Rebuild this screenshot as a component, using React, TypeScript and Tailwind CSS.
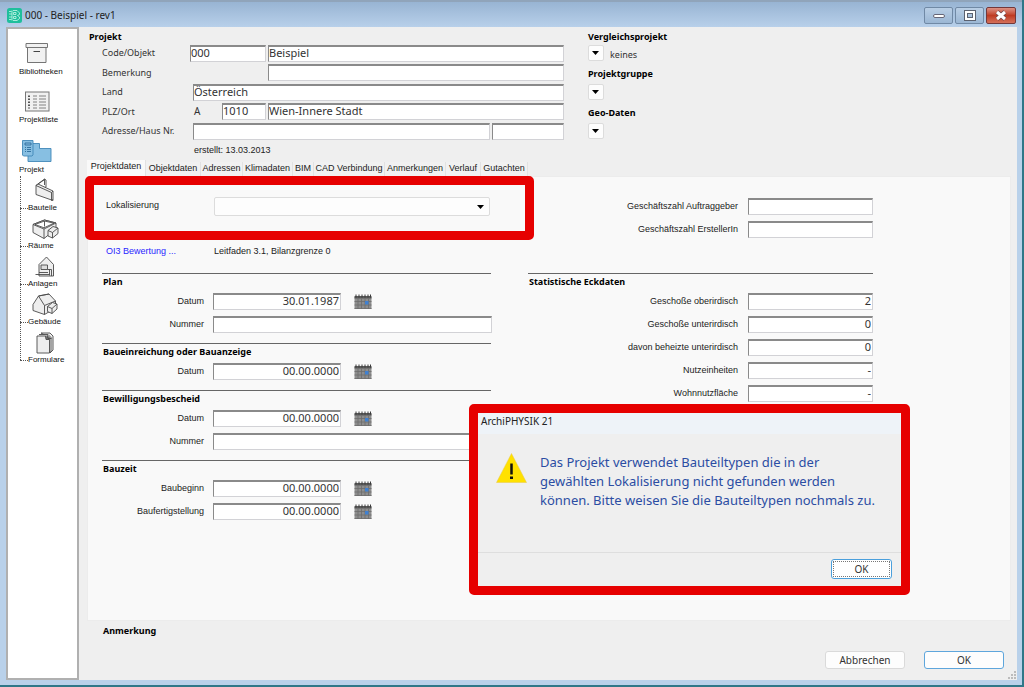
import { useState, type ReactNode } from "react";
import clsx from "clsx";

const TABS = [
    { name: "Projektdaten", width: "w-[59px]" },
    { name: "Objektdaten", width: "w-[55px]" },
    { name: "Adressen", width: "w-[42px]" },
    { name: "Klimadaten", width: "w-[50px]" },
    { name: "BIM", width: "w-[21px]" },
    { name: "CAD Verbindung", width: "w-[71px]" },
    { name: "Anmerkungen", width: "w-[61px]" },
    { name: "Verlauf", width: "w-[35px]" },
    { name: "Gutachten", width: "w-[47px]" },
];

const LINE = { fill: "#eeeeee", stroke: "#4a4a4a", strokeWidth: 0.9, strokeLinejoin: "round" as const };

/* ---------- icons ---------- */

function AppIcon() {
    return (
        <svg className="h-[15px] w-[15px]" viewBox="0 0 15 15" fill="none" stroke="#c9f7ea" strokeWidth="0.8">
            <rect width="15" height="15" rx="2.5" fill="#1fbf9c" stroke="none" />
            <path d="M2 3.500h2.500M2 6h3M2 9h3M2 11.500h2.500M6 2.500h4l2.500 2.500v1.500L10.500 7.500l2 1.500v1.500L10 12.500H6M6.500 4.500h2.500v2H6.500zM6.500 8.500h2.500v2H6.500zM5 2.500v10" />
        </svg>
    );
}

function BoxIcon() {
    return (
        <svg className="h-[22px] w-[24px]" viewBox="0 0 24 22" fill="#f1f1f1" stroke="#757575" strokeWidth="1">
            <path d="M2.500 5.500h18.500v15H2.500z" />
            <path d="M1 1.500h21.500v4H1z" />
            <path d="M8.500 9.500h6.500" stroke="#444" />
        </svg>
    );
}

function ListIcon() {
    return (
        <svg className="h-[21px] w-[25px]" viewBox="0 0 25 21" fill="none" stroke="#777">
            <rect x="0.500" y="1" width="23.500" height="19" fill="#f1f1f1" />
            <path d="M4 4.500v13" stroke="#555" strokeWidth="2" strokeDasharray="1.500 1.500" />
            <path d="M8 5h4M8 8h4M8 11h4M8 14h4M8 17h4M14 5h7M14 8h7M14 11h7M14 14h7M14 17h7" strokeWidth="0.900" />
        </svg>
    );
}

function ProjectIcon() {
    return (
        <svg className="h-[23px] w-[30px]" viewBox="0 0 30 23" fill="#87bfe2" stroke="#4288b8" strokeWidth="0.9">
            <path d="M6 21.500V3.500h11.500v5h11.500v13z" />
            <path d="M0.500 0.500h10.500v14.500l-1 1H1.500l-1-1z" />
            <path d="M3 3h6v2H3zM3 7.500h1M5 7.500h4M3 9.500h1M5 9.500h4M3 11.500h1M5 11.500h4" stroke="#2d6c9c" />
        </svg>
    );
}

function WallIcon() {
    return (
        <svg className="h-[24px] w-[20px]" viewBox="0 0 20 24" {...LINE}>
            <path d="M1 7.500l8.500-6.500 1.500 1v7l-7 3.500z" fill="#fff" />
            <path d="M1 7.500l2-1.500 15 7v9.500L1 16.500z" />
            <path d="M9.500 1v6M1 7.500L16.500 14.500v8l1.500-1M16.500 14.500l1.500-1.500M3 6l6-4" fill="none" />
        </svg>
    );
}

function RoomIcon() {
    return (
        <svg className="h-[21px] w-[27px]" viewBox="0 0 27 21" {...LINE}>
            <path d="M1 5.500L12.500 1 24 4v6l-12 9.500L1 13.500z" />
            <path d="M1 5.500L12.500 1 24 4 12 10z" fill="#fff" />
            <path d="M3 5.500L12.500 2 22 4.200l-10 4.600zM12.500 2v5.500M12 10v9.500" fill="none" />
            <path d="M16 11.500l5-4 5 1.500v5.500l-5.500 4.500-4.500-2z" />
            <path d="M16 11.500l4.500 2L26 9M20.500 13.500v5.500" fill="none" />
        </svg>
    );
}

function PlantIcon() {
    return (
        <svg className="h-[22px] w-[20px]" viewBox="0 0 20 22" {...LINE}>
            <path d="M4 19V8.500L11.500 1l7 7.500v11.500H4z" />
            <rect x="6" y="9" width="6.500" height="4.500" fill="#ddd" />
            <path d="M0.500 18.500h14M12.500 13.500h4v6.500M14.500 13.500v6M4 16.500h9" fill="none" />
        </svg>
    );
}

function HouseIcon() {
    return (
        <svg className="h-[23px] w-[26px]" viewBox="0 0 26 23" {...LINE}>
            <path d="M1 11.500L6.500 3l10.500-2 6.500 7v7L12.500 21.500 1 17.500z" />
            <path d="M6.500 3l6 9.500L23.500 8M12.500 12.500v9M17 1L6.500 3" fill="none" />
            <path d="M15.500 13.500l5-4 4.500 1.500v5l-5 4.500-4.500-2z" />
            <path d="M15.500 13.500l4.500 2 5-4.500M20 15.500v5" fill="none" />
        </svg>
    );
}

function FormsIcon() {
    return (
        <svg className="h-[22px] w-[18px]" viewBox="0 0 18 22" {...LINE}>
            <path d="M5 1h9l3 3v14l-3 3V6z" />
            <path d="M3 2.500h9l3 3V20" />
            <path d="M1 4h8.500l4 3.500V21H1z" />
            <path d="M9.500 4l0.500 3.500h3.500M11 3l1 3.500h3.500" fill="#777" />
        </svg>
    );
}

function CalendarIcon() {
    return (
        <svg className="h-[16px] w-[18px]" viewBox="0 0 18 16">
            <path d="M0.500 3h17v12H0.500z" fill="#8e8e8e" />
            <path d="M0.500 2h17v2.500H0.500z" fill="#5a5a5a" />
            <path d="M2 0.500v3M5 0.500v3M8 0.500v3M11 0.500v3M14 0.500v3M16.500 0.500v3" stroke="#3a3a3a" />
            <path d="M0.500 7.500h17M0.500 11h17M0.500 14.500h17M4 4.500v10.500M7.500 4.500v10.500M11 4.500v10.500M14.500 4.500v10.500" stroke="#6c6c6c" strokeWidth="0.800" />
            <rect x="11" y="7" width="3.500" height="3.500" fill="#3f80d0" />
        </svg>
    );
}

function Arrow() {
    return (
        <svg className="h-1 w-[7px]" viewBox="0 0 7 4">
            <path d="M0 0h7L3.500 4z" fill="#000" />
        </svg>
    );
}

/* ---------- controls ---------- */

function TextField({ id, label, value = "", className }: { id?: string; label?: string; value?: string; className?: string }) {
    return (
        <input
            id={id}
            aria-label={label}
            type="text"
            defaultValue={value}
            className={clsx(
                "h-[17px] min-w-0 border border-t-2 border-t-[#8a8a8a] border-r-[#d2d2d6] border-b-[#d2d2d6] border-l-[#8a8a8a] bg-white pb-[3px] font-['Noto_Sans',sans-serif] text-[11px] leading-[11px] text-[#333] outline-none",
                className,
            )}
        />
    );
}

function MiniSelect({ label, option = "" }: { label: string; option?: string }) {
    return (
        <div className="relative h-4 w-4">
            <select aria-label={label} className="h-4 w-4 appearance-none rounded-xs border border-[#dcdcdc] bg-[#fdfdfd] text-transparent">
                <option>{option}</option>
            </select>
            <span className="pointer-events-none absolute top-[6px] left-1 flex">
                <Arrow />
            </span>
        </div>
    );
}

function HeaderRow({ id, label, children }: { id: string; label: string; children: ReactNode }) {
    return (
        <div className="flex items-center">
            <label htmlFor={id} className="w-[88px] shrink-0">
                {label}
            </label>
            <div className="flex flex-1 items-center justify-end gap-[2px]">{children}</div>
        </div>
    );
}

function Section({ title, children }: { title: string; children: ReactNode }) {
    return (
        <section className="border-t border-[#666] pb-[7px]">
            <h2 className="h-4 pl-px font-['Noto_Sans',sans-serif] leading-4 font-bold text-black">{title}</h2>
            {children}
        </section>
    );
}

function DateRow({ id, label, value = "00.00.0000" }: { id: string; label: string; value?: string }) {
    return (
        <div className="flex h-[23px] items-center">
            <label htmlFor={id} className="w-[102px] text-right">
                {label}
            </label>
            <TextField id={id} value={value} className="ml-[9px] w-32 pr-px text-right" />
            <button type="button" aria-label="Kalender" className="ml-[13px]">
                <CalendarIcon />
            </button>
        </div>
    );
}

function NumberRow({ id, label }: { id: string; label: string }) {
    return (
        <div className="flex h-[23px] items-center">
            <label htmlFor={id} className="w-[102px] shrink-0 text-right">
                {label}
            </label>
            <TextField id={id} className="ml-[9px] w-[279px] shrink-0" />
        </div>
    );
}

function StatRow({ id, label, value = "" }: { id: string; label: string; value?: string }) {
    return (
        <div className="flex h-[23px] items-center gap-[10px]">
            <label htmlFor={id} className="w-[210px] shrink-0 text-right">
                {label}
            </label>
            <TextField id={id} value={value} className="w-[125px] shrink-0 pr-px text-right" />
        </div>
    );
}

function TreeItem({ label, children }: { label: string; children: ReactNode }) {
    return (
        <li className="flex h-[38px] flex-col justify-end">
            <div className="flex w-[50px] justify-center">{children}</div>
            <a href="#" className="flex h-3 items-center leading-3">
                <span className="w-2 border-t border-dotted border-[#555]" />
                {label}
            </a>
        </li>
    );
}

/* ---------- areas ---------- */

function TitleBar() {
    return (
        <header className="flex h-[27px] shrink-0 items-center border-t-2 border-[#90a4ba] bg-linear-to-b from-[#98b4d3] to-[#b8d0ea] pt-[2px] pr-[6px] pl-[7px]">
            <AppIcon />
            <h1 className="ml-[3px] text-[10px] text-[#222]">000 - Beispiel - rev1</h1>
            <div className="ml-auto flex gap-[2px]">
                <button type="button" aria-label="Minimieren" className="flex h-[17px] w-[29px] items-center justify-center rounded-xs border border-[#7089a5] bg-linear-to-b from-[#b9cee5] to-[#9bb7d4]">
                    <span className="h-1 w-3 rounded-xs border border-[#667] bg-white" />
                </button>
                <button type="button" aria-label="Maximieren" className="flex h-[17px] w-[29px] items-center justify-center rounded-xs border border-[#7089a5] bg-linear-to-b from-[#b9cee5] to-[#9bb7d4]">
                    <svg className="h-[11px] w-3" viewBox="0 0 12 11" fill="none">
                        <path d="M2 2h8v7H2z" stroke="#5c6270" strokeWidth="4" />
                        <path d="M2 2h8v7H2z" stroke="#fff" strokeWidth="2" />
                    </svg>
                </button>
                <button type="button" aria-label="Schließen" className="flex h-[17px] w-[30px] items-center justify-center rounded-xs border border-[#73383a] bg-linear-to-b from-[#dc9184] via-[#bf3b22] to-[#d4705a]">
                    <svg className="h-[11px] w-3" viewBox="0 0 12 11" fill="none">
                        <path d="M2 2l8 7M10 2L2 9" stroke="#6a4548" strokeWidth="4.500" />
                        <path d="M2 2l8 7M10 2L2 9" stroke="#fff" strokeWidth="3" />
                    </svg>
                </button>
            </div>
        </header>
    );
}

function Sidebar() {
    return (
        <nav className="w-[73px] shrink-0 border-2 border-[#b0b0b0] bg-white pt-[13px] pl-[11px] font-['Liberation_Sans',sans-serif] text-[8px] text-[#111]">
            <a href="#" className="flex h-[49px] flex-col">
                <span className="ml-[6px] flex h-6">
                    <BoxIcon />
                </span>
                <span className="leading-3">Bibliotheken</span>
            </a>
            <a href="#" className="flex h-[49px] flex-col">
                <span className="ml-[6px] flex h-[23px]">
                    <ListIcon />
                </span>
                <span className="leading-3">Projektliste</span>
            </a>
            <a href="#" className="flex h-9 flex-col">
                <span className="ml-[3px] flex h-6">
                    <ProjectIcon />
                </span>
                <span className="leading-3">Projekt</span>
            </a>
            <ul className="relative ml-px">
                <li aria-hidden className="absolute top-0 bottom-[6px] left-0 border-l border-dotted border-[#555]" />
                <TreeItem label="Bauteile"><WallIcon /></TreeItem>
                <TreeItem label="Räume"><RoomIcon /></TreeItem>
                <TreeItem label="Anlagen"><PlantIcon /></TreeItem>
                <TreeItem label="Gebäude"><HouseIcon /></TreeItem>
                <TreeItem label="Formulare"><FormsIcon /></TreeItem>
            </ul>
        </nav>
    );
}

function ProjectHeader() {
    return (
        <div className="flex pl-[10px]">
            <div className="w-[475px] shrink-0">
                <h2 className="h-4 pt-[2px] leading-4 font-bold text-black">Projekt</h2>
                <div className="grid grid-rows-[20px_19px_20px_19px_20px] pl-[13px]">
                    <HeaderRow id="code" label="Code/Objekt">
                        <TextField id="code" value="000" className="w-[76px]" />
                        <TextField label="Objekt" value="Beispiel" className="w-[296px]" />
                    </HeaderRow>
                    <HeaderRow id="bemerkung" label="Bemerkung">
                        <TextField id="bemerkung" className="w-[296px]" />
                    </HeaderRow>
                    <HeaderRow id="land" label="Land">
                        <TextField id="land" value="Österreich" className="w-[371px]" />
                    </HeaderRow>
                    <HeaderRow id="plz" label="PLZ/Ort">
                        <span className="w-[26px] text-[10px]">A</span>
                        <TextField id="plz" value="1010" className="w-[44px]" />
                        <TextField label="Ort" value="Wien-Innere Stadt" className="w-[296px]" />
                    </HeaderRow>
                    <HeaderRow id="adresse" label="Adresse/Haus Nr.">
                        <TextField id="adresse" className="w-[297px]" />
                        <TextField label="Haus Nr." className="w-[72px]" />
                    </HeaderRow>
                </div>
                <p className="flex h-[19px] items-center pl-[105px] font-['Liberation_Sans',sans-serif] text-[#222]">erstellt: 13.03.2013</p>
            </div>
            <div className="ml-6">
                <h2 className="h-[18px] pt-[2px] leading-4 font-bold text-black">Vergleichsprojekt</h2>
                <div className="flex h-[19px] gap-[6px]">
                    <MiniSelect label="Vergleichsprojekt" option="keines" />
                    <span className="pt-[3px]">keines</span>
                </div>
                <h2 className="h-5 pt-[2px] leading-4 font-bold text-black">Projektgruppe</h2>
                <div className="h-[19px]">
                    <MiniSelect label="Projektgruppe" />
                </div>
                <h2 className="h-5 pt-[2px] leading-4 font-bold text-black">Geo-Daten</h2>
                <MiniSelect label="Geo-Daten" />
            </div>
        </div>
    );
}

function ProjectPanel() {
    return (
        <div className="grid flex-1 auto-rows-min grid-cols-[389px_345px] gap-x-[37px] border border-[#ececec] bg-[#f9f9f9] pl-[14px]">
            <div className="h-24">
                <div className="relative flex h-[58px] items-center pl-1">
                    <div className="pointer-events-none absolute -top-px -right-[43px] -bottom-[5px] -left-[17px] rounded-[5px] border-9 border-[#e60000]" />
                    <label htmlFor="lokalisierung" className="w-[108px]">
                        Lokalisierung
                    </label>
                    <div className="relative">
                        <select id="lokalisierung" className="h-[19px] w-[276px] appearance-none rounded-xs border border-[#dcdcdc] bg-[#fdfdfd] text-[11px]">
                            <option />
                        </select>
                        <span className="pointer-events-none absolute top-2 right-[6px] flex">
                            <Arrow />
                        </span>
                    </div>
                </div>
                <div className="flex h-[34px] items-center pl-1">
                    <a href="#" className="w-[108px] text-[#2a1fff]">
                        OI3 Bewertung ...
                    </a>
                    <span>Leitfaden 3.1, Bilanzgrenze 0</span>
                </div>
            </div>
            <div className="h-24 pt-[18px]">
                <StatRow id="gz-auftraggeber" label="Geschäftszahl Auftraggeber" />
                <StatRow id="gz-ersteller" label="Geschäftszahl ErstellerIn" />
            </div>
            <div>
                <Section title="Plan">
                    <DateRow id="plan-datum" label="Datum" value="30.01.1987" />
                    <NumberRow id="plan-nummer" label="Nummer" />
                </Section>
                <Section title="Baueinreichung oder Bauanzeige">
                    <DateRow id="einreichung-datum" label="Datum" />
                </Section>
                <Section title="Bewilligungsbescheid">
                    <DateRow id="bescheid-datum" label="Datum" />
                    <NumberRow id="bescheid-nummer" label="Nummer" />
                </Section>
                <Section title="Bauzeit">
                    <DateRow id="baubeginn" label="Baubeginn" />
                    <DateRow id="baufertig" label="Baufertigstellung" />
                </Section>
            </div>
            <Section title="Statistische Eckdaten">
                <StatRow id="oberirdisch" label="Geschoße oberirdisch" value="2" />
                <StatRow id="unterirdisch" label="Geschoße unterirdisch" value="0" />
                <StatRow id="beheizt" label="davon beheizte unterirdisch" value="0" />
                <StatRow id="einheiten" label="Nutzeinheiten" value="-" />
                <StatRow id="nutzflaeche" label="Wohnnutzfläche" value="-" />
            </Section>
        </div>
    );
}

function MessageDialog() {
    return (
        <div
            role="alertdialog"
            aria-labelledby="dialog-title"
            className="absolute top-[404px] left-[469px] flex h-[191px] w-[441px] flex-col rounded-[5px] border-9 border-[#e60000] bg-[#efefef]"
        >
            <h2 id="dialog-title" className="h-[21px] bg-[#eef3f8] pl-[3px] text-[10px] leading-4 text-[#222]">
                ArchiPHYSIK 21
            </h2>
            <div className="flex flex-1 gap-[13px] pt-[19px] pl-[18px]">
                <svg className="h-[30px] w-[31px] shrink-0" viewBox="0 0 31 30">
                    <path d="M15.500 0.500L30.500 29.500H0.500z" fill="#ffe100" stroke="#e8c94a" strokeWidth="0.500" />
                    <path d="M15.500 10.500v11" stroke="#111" strokeWidth="2.500" />
                    <path d="M14 23.500h3v2.500h-3z" fill="#111" />
                </svg>
                <p className="text-[13px] leading-[19px] whitespace-nowrap text-[#2b4da3]">
                    Das Projekt verwendet Bauteiltypen die in der
                    <br />
                    gewählten Lokalisierung nicht gefunden werden
                    <br />
                    können. Bitte weisen Sie die Bauteiltypen nochmals zu.
                </p>
            </div>
            <div className="flex h-[34px] justify-end border-t border-[#dedede] pt-[6px] pr-[9px]">
                <button type="button" className="h-5 w-[61px] rounded-[3px] border border-[#4a9fdc] bg-white p-px text-[10px] text-[#333]">
                    <span className="flex h-full items-center justify-center border border-dotted border-[#777]">OK</span>
                </button>
            </div>
        </div>
    );
}

export default function App() {
    const [tab, setTab] = useState("Projektdaten");

    return (
        <div className="relative flex min-h-screen flex-col border-r-2 border-b-2 border-r-[#2f7788] border-b-[#2f7788] bg-[#b9d1ea] font-['Noto_Sans','Open_Sans',sans-serif] text-[9px] text-[#333]">
            <TitleBar />
            <div className="mr-[5px] mb-[5px] ml-[6px] flex flex-1 bg-[#efefef]">
                <Sidebar />
                <main className="flex flex-1 flex-col pl-2">
                    <div className="-ml-2">
                        <ProjectHeader />
                    </div>
                    <div role="tablist" className="flex h-4 items-end font-['Liberation_Sans',sans-serif] text-[#222]">
                        {TABS.map(({ name, width }) => (
                            <button
                                key={name}
                                type="button"
                                role="tab"
                                aria-selected={tab === name}
                                onClick={() => setTab(name)}
                                className={clsx(
                                    "shrink-0 border-r border-[#e2e2e2] whitespace-nowrap",
                                    width,
                                    tab === name ? "h-4 bg-[#f9f9f9] pb-1" : "h-[14px] bg-[#f1f1f1]",
                                )}
                            >
                                {name}
                            </button>
                        ))}
                    </div>
                    <div className="mr-[6px] flex flex-1 flex-col font-['Liberation_Sans',sans-serif] text-[#222]">
                        <ProjectPanel />
                    </div>
                    <footer className="relative flex h-[59px] flex-col pr-[13px]">
                        <h2 className="h-[30px] pt-[2px] pl-4 leading-4 font-bold text-black">Anmerkung</h2>
                        <div className="flex justify-end gap-[19px] text-[10px]">
                            <button type="button" className="h-[18px] w-20 rounded-[3px] border border-[#dadada] bg-[#fdfdfd]">
                                Abbrechen
                            </button>
                            <button type="button" className="h-[18px] w-20 rounded-[3px] border border-[#5ea6dc] bg-[#fdfdfd]">
                                OK
                            </button>
                        </div>
                        <svg className="absolute right-[1px] bottom-[1px] h-2 w-2" viewBox="0 0 8 8" fill="#bcbcbc">
                            <path d="M6 0h2v2H6zM6 3h2v2H6zM3 3h2v2H3zM6 6h2v2H6zM3 6h2v2H3zM0 6h2v2H0z" />
                        </svg>
                    </footer>
                </main>
            </div>
            <MessageDialog />
        </div>
    );
}
